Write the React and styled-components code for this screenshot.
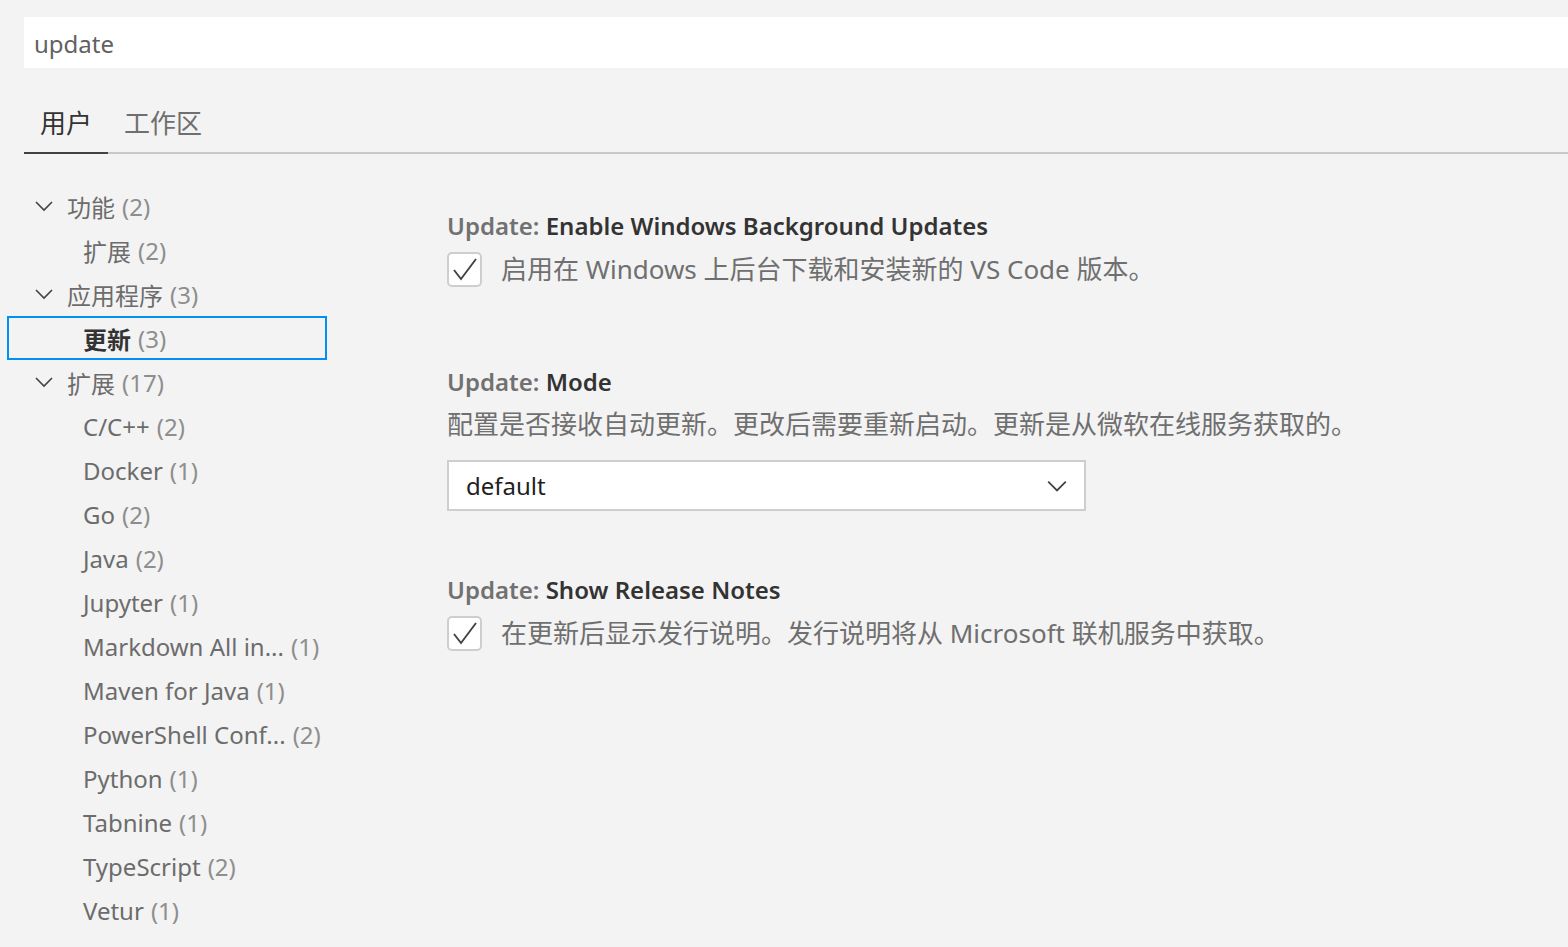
import React from "react";
import styled, { createGlobalStyle } from "styled-components";

const GlobalStyle = createGlobalStyle`
  html, body {
    margin: 0;
    padding: 0;
    background: #f3f3f3;
  }
  body {
    font-family: "Segoe UI", "Noto Sans", "Noto Sans CJK SC", sans-serif;
    overflow: hidden;
  }
`;

const tree = [
  { label: "功能", count: 2, level: 0 },
  { label: "扩展", count: 2, level: 1 },
  { label: "应用程序", count: 3, level: 0 },
  { label: "更新", count: 3, level: 1, selected: true },
  { label: "扩展", count: 17, level: 0 },
  { label: "C/C++", count: 2, level: 1 },
  { label: "Docker", count: 1, level: 1 },
  { label: "Go", count: 2, level: 1 },
  { label: "Java", count: 2, level: 1 },
  { label: "Jupyter", count: 1, level: 1 },
  { label: "Markdown All in...", count: 1, level: 1 },
  { label: "Maven for Java", count: 1, level: 1 },
  { label: "PowerShell Conf...", count: 2, level: 1 },
  { label: "Python", count: 1, level: 1 },
  { label: "Tabnine", count: 1, level: 1 },
  { label: "TypeScript", count: 2, level: 1 },
  { label: "Vetur", count: 1, level: 1 },
];

const Chevron = ({ size = 20 }) => (
  <svg width={size} height={size} viewBox="0 0 20 20" fill="none">
    <path d="M2 6 L10 14 L18 6" stroke="#424242" strokeWidth="1.6" />
  </svg>
);

const Check = () => (
  <svg width="28" height="28" viewBox="0 0 28 28" fill="none">
    <path d="M3 15 L10 24 L25 4" stroke="#424242" strokeWidth="1.9" />
  </svg>
);

const App = () => {
  return (
    <>
      <GlobalStyle />
      <Page>
        <SearchBox>update</SearchBox>
        <Tabs>
          <Tab active>用户</Tab>
          <Tab>工作区</Tab>
        </Tabs>
        <Body>
          <TreeList>
            {tree.map((item, i) => (
              <TreeRow key={i} selected={item.selected}>
                <Twistie>{item.level === 0 && <Chevron />}</Twistie>
                <TreeLabel level={item.level} selected={item.selected}>
                  {item.label}
                </TreeLabel>
                <Count>({item.count})</Count>
              </TreeRow>
            ))}
          </TreeList>

          <Settings>
            <Setting space={77}>
              <Title>
                <Category>Update: </Category>
                Enable Windows Background Updates
              </Title>
              <CheckRow>
                <CheckBox>
                  <Check />
                </CheckBox>
                <Desc>启用在 Windows 上后台下载和安装新的 VS Code 版本。</Desc>
              </CheckRow>
            </Setting>

            <Setting space={61}>
              <Title>
                <Category>Update: </Category>
                Mode
              </Title>
              <HelpText>
                配置是否接收自动更新。更改后需要重新启动。更新是从微软在线服务获取的。
              </HelpText>
              <Select>
                <span>default</span>
                <Chevron size={22} />
              </Select>
            </Setting>

            <Setting>
              <Title>
                <Category>Update: </Category>
                Show Release Notes
              </Title>
              <CheckRow>
                <CheckBox>
                  <Check />
                </CheckBox>
                <Desc>
                  在更新后显示发行说明。发行说明将从 Microsoft 联机服务中获取。
                </Desc>
              </CheckRow>
            </Setting>
          </Settings>
        </Body>
      </Page>
    </>
  );
};

const Page = styled.div`
  width: 1568px;
  height: 947px;
  padding: 17px 0 0 24px;
  box-sizing: border-box;
`;

const SearchBox = styled.div`
  height: 51px;
  background: #ffffff;
  color: #616161;
  font-size: 24px;
  line-height: 53px;
  padding-left: 10px;
`;

const Tabs = styled.div`
  display: flex;
  margin-top: 30px;
  border-bottom: 2px solid #c8c8c8;
  height: 56px;
  box-sizing: border-box;
`;

const Tab = styled.div`
  padding: 0 16px;
  font-size: 26px;
  line-height: 50px;
  color: ${(p) => (p.active ? "#333333" : "#6f6f6f")};
  border-bottom: 2px solid ${(p) => (p.active ? "#424242" : "transparent")};
  margin-bottom: -2px;
`;

const Body = styled.div`
  display: flex;
  margin-top: 30px;
`;

const TreeList = styled.div`
  width: 320px;
  margin-left: -17px;
  flex-shrink: 0;
`;

const TreeRow = styled.div`
  display: flex;
  align-items: center;
  height: 44px;
  box-sizing: border-box;
  border: 2px solid ${(p) => (p.selected ? "#0090f1" : "transparent")};
  font-size: 24px;
  white-space: nowrap;
`;

const Twistie = styled.div`
  width: 22px;
  flex-shrink: 0;
  margin-left: 25px;
  margin-right: 11px;
  display: flex;
  align-items: center;
`;

const TreeLabel = styled.span`
  margin-left: ${(p) => (p.level === 1 ? "16px" : "0")};
  color: ${(p) => (p.selected ? "#333333" : "#6c6c6c")};
  font-weight: ${(p) => (p.selected ? 700 : 400)};
`;

const Count = styled.span`
  color: #8e8e8e;
  margin-left: 7px;
`;

const Settings = styled.div`
  margin-left: 120px;
  display: flex;
  flex-direction: column;
  padding-top: 24px;
`;

const Setting = styled.div`
  display: flex;
  flex-direction: column;
  margin-bottom: ${(p) => p.space || 0}px;
`;

const Title = styled.div`
  font-size: 24px;
  line-height: 36px;
  font-weight: 600;
  color: #333333;
`;

const Category = styled.span`
  color: #717171;
`;

const CheckRow = styled.div`
  display: flex;
  align-items: center;
  gap: 19px;
  margin-top: 7px;
`;

const CheckBox = styled.div`
  width: 35px;
  height: 35px;
  flex-shrink: 0;
  box-sizing: border-box;
  border: 2px solid #cecece;
  border-radius: 5px;
  background: #ffffff;
  display: flex;
  align-items: center;
  justify-content: center;
`;

const Desc = styled.div`
  font-size: 26px;
  line-height: 36px;
  color: #6f6f6f;
`;

const HelpText = styled(Desc)`
  margin-top: 6px;
`;

const Select = styled.div`
  width: 639px;
  height: 51px;
  box-sizing: border-box;
  margin-top: 18px;
  background: #ffffff;
  border: 2px solid #cecece;
  display: flex;
  align-items: center;
  justify-content: space-between;
  padding: 0 16px 0 17px;
  font-size: 24px;
  color: #1f1f1f;
`;

export default App;
